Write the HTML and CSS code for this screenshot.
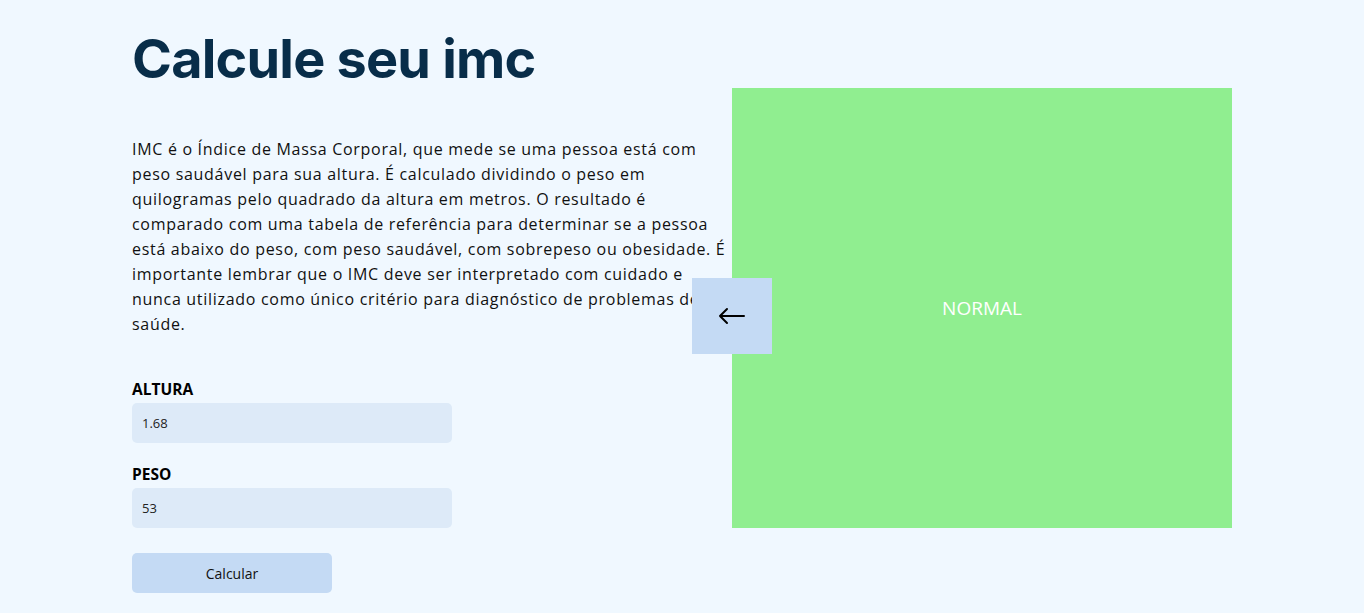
FILE: index.html
```html
<!DOCTYPE html>
<html lang="pt-BR">
<head>
<meta charset="utf-8">
<title>Calcule seu imc</title>
<link rel="stylesheet" href="styles.css">
</head>
<body>
<main class="page">
  <section class="left">
    <h1 class="title">Calcule seu imc</h1>
    <p class="desc">IMC é o Índice de Massa Corporal, que mede se uma pessoa está com peso saudável para sua altura. É calculado dividindo o peso em quilogramas pelo quadrado da altura em metros. O resultado é comparado com uma tabela de referência para determinar se a pessoa está abaixo do peso, com peso saudável, com sobrepeso ou obesidade. É importante lembrar que o IMC deve ser interpretado com cuidado e nunca utilizado como único critério para diagnóstico de problemas de saúde.</p>
    <form class="form">
      <label class="label" for="altura">ALTURA</label>
      <input class="input" id="altura" type="text" value="1.68">
      <label class="label" for="peso">PESO</label>
      <input class="input" id="peso" type="text" value="53">
      <button class="btn" type="button">Calcular</button>
    </form>
  </section>
  <section class="right">
    <div class="result">
      <span class="result-text">NORMAL</span>
      <button class="back" type="button" aria-label="Voltar">
        <svg width="28" height="18" viewBox="0 0 28 18" fill="none" stroke="#000" stroke-width="2" stroke-linecap="round" stroke-linejoin="round"><path d="M26 9H2M9 2L2 9l7 7"/></svg>
      </button>
    </div>
  </section>
</main>
</body>
</html>
```
FILE: styles.css
```css
* { box-sizing: border-box; }
html, body { margin: 0; padding: 0; }
body {
  background: #F0F8FF;
  font-family: "Open Sans", "Noto Sans", sans-serif;
  color: #111;
}
.page {
  width: 1100px;
  margin: 0 auto;
  display: flex;
}
.left {
  width: 600px;
  flex: none;
}
.title {
  margin: 26px 0 0;
  font-family: "Inter", "Open Sans", sans-serif;
  font-weight: 700;
  font-size: 54px;
  line-height: 66px;
  letter-spacing: -0.8px;
  color: #082D49;
}
.desc {
  margin: 45px 0 0;
  font-size: 16px;
  line-height: 25px;
  letter-spacing: 0.7px;
  color: #111;
}
.form {
  display: flex;
  flex-direction: column;
  align-items: flex-start;
  margin-top: 42px;
}
.label {
  font-weight: 700;
  font-size: 15.5px;
  line-height: 20px;
  color: #000;
  margin-bottom: 4px;
}
.input {
  width: 320px;
  height: 40px;
  border: none;
  border-radius: 5px;
  background: #DDEAF8;
  padding: 0 10px;
  font-family: inherit;
  font-size: 13px;
  color: #222;
  margin-bottom: 21px;
  outline: none;
}
.btn {
  margin-top: 4px;
  width: 200px;
  height: 40px;
  border: none;
  border-radius: 5px;
  background: #C4DAF4;
  font-family: inherit;
  font-size: 14px;
  color: #111;
}
.right {
  width: 500px;
  flex: none;
  padding-top: 88px;
}
.result {
  position: relative;
  height: 440px;
  background: #90EE90;
  display: flex;
  align-items: center;
  justify-content: center;
}
.result-text {
  color: #fff;
  font-size: 19px;
}
.back {
  position: absolute;
  left: -40px;
  top: 190px;
  width: 80px;
  height: 76px;
  border: none;
  background: #C4DAF4;
  display: flex;
  align-items: center;
  justify-content: center;
  padding: 0;
}
```
